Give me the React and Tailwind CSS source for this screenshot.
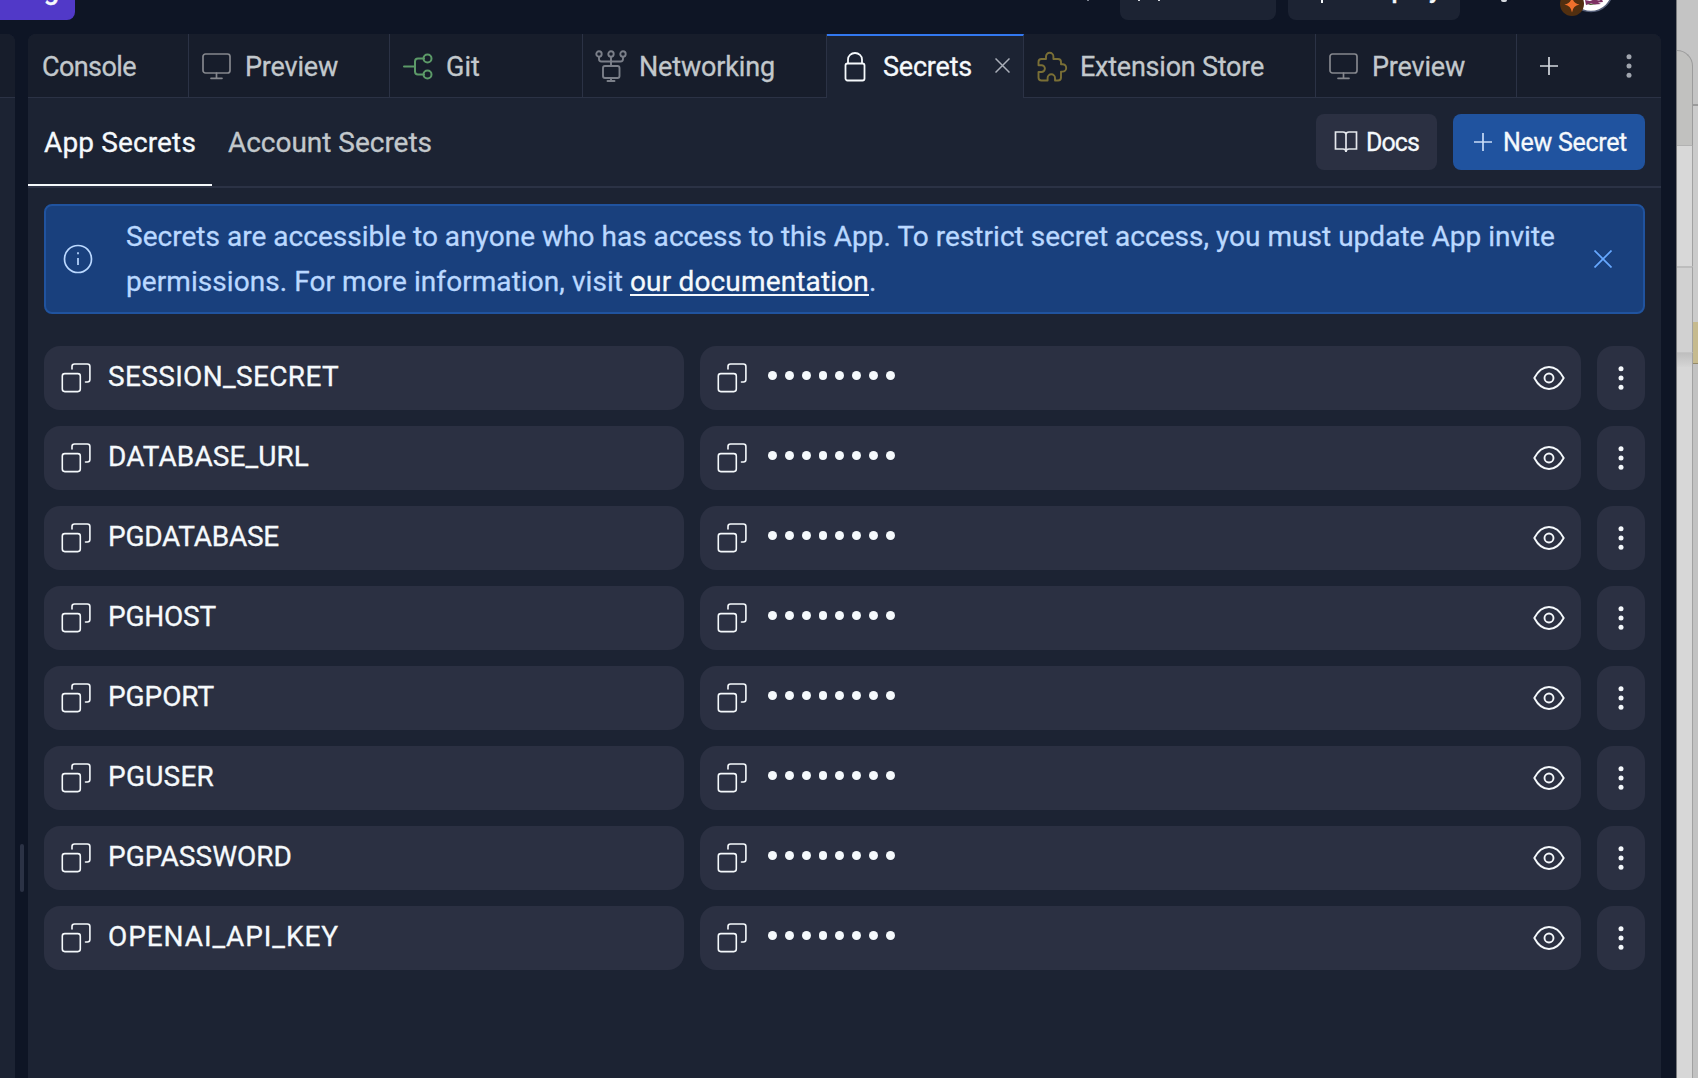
import React from "react";

const ROWS = [
  { name: "SESSION_SECRET", width: 231 },
  { name: "DATABASE_URL", width: 201 },
  { name: "PGDATABASE", width: 171 },
  { name: "PGHOST", width: 108 },
  { name: "PGPORT", width: 106 },
  { name: "PGUSER", width: 106 },
  { name: "PGPASSWORD", width: 184 },
  { name: "OPENAI_API_KEY", width: 231 },
];

/* Spreads or tightens the letters so that the text fills the given width. */
function Fit({ width, className = "", children }) {
  const ref = React.useRef(null);
  const [spacing, setSpacing] = React.useState(0);
  React.useLayoutEffect(() => {
    const el = ref.current;
    el.style.letterSpacing = "0px";
    const natural = el.getBoundingClientRect().width;
    const next = (width - natural) / el.textContent.length;
    el.style.letterSpacing = next + "px";
    setSpacing(next);
  }, [width]);
  return (
    <span ref={ref} className={"inline-block whitespace-nowrap " + className} style={{ letterSpacing: spacing + "px" }}>
      {children}
    </span>
  );
}

function Monitor() {
  return (
    <svg className="h-8 w-8 shrink-0" viewBox="0 0 32 32" fill="none" stroke="#85878d" strokeWidth="1.7" strokeLinecap="round">
      <rect x="2" y="4" width="27" height="19" rx="2.5" />
      <path d="M15.5 23v5M10 28.3h11" />
    </svg>
  );
}
function GitIcon() {
  return (
    <svg className="h-8 w-8 shrink-0" viewBox="0 0 32 32" fill="none" stroke="#5c9a68" strokeWidth="2" strokeLinecap="round">
      <path d="M2 16.500h11M22 8.500h-6q-3 0-3 3v10q0 3 3 3h6" />
      <circle cx="25.5" cy="8.500" r="4" />
      <circle cx="25.5" cy="24.500" r="4" />
    </svg>
  );
}
function NetIcon() {
  return (
    <svg className="h-8 w-8 shrink-0" viewBox="0 0 32 32" fill="none" stroke="#7b7f89" strokeWidth="1.9" strokeLinecap="round">
      <circle cx="4" cy="4" r="2.7" />
      <circle cx="16" cy="4" r="2.7" />
      <circle cx="28" cy="4" r="2.7" />
      <path d="M4 7v2q0 2.500 2.500 2.500h19q2.500 0 2.500-2.500V7M16 7v9M16 28v3M12.500 31h7" />
      <rect x="8" y="16" width="16.500" height="12" rx="2" />
    </svg>
  );
}
function Lock() {
  return (
    <svg className="h-8 w-8 shrink-0" viewBox="0 0 32 32" fill="none" stroke="#f5f9fc" strokeWidth="1.8">
      <rect x="6.500" y="13.500" width="19" height="17" rx="2" />
      <path d="M9 13.500V9.500a7 6.500 0 0 1 14 0v4" />
    </svg>
  );
}
function Puzzle() {
  return (
    <svg className="h-8 w-8 shrink-0" viewBox="0 0 32 32" fill="none" stroke="#7a6f36" strokeWidth="1.900" strokeLinejoin="round">
      <path d="M5.500 9H10V6.500a3.700 3.700 0 0 1 7.400 0V9H22q3 0 3 3V14.200h1.500a3.700 3.700 0 0 1 0 7.400H25V27.500q0 3-3 3h-3v-2.500a3.700 3.700 0 0 0-7.400 0v2.500H5.500q-3 0-3-3v-5.500h3a3.400 3.400 0 0 0 0-6.800h-3V12q0-3 3-3z" />
    </svg>
  );
}
function Copy() {
  return (
    <svg className="h-[30px] w-[30px] shrink-0" viewBox="0 0 30 30" fill="none" stroke="#f5f9fc" strokeWidth="1.6" strokeLinecap="round">
      <rect x="1.300" y="10.600" width="18" height="18" rx="2.500" />
      <path d="M11 6V3.500q0-2.500 2.500-2.500h12.900q2.500 0 2.500 2.500v13q0 2.500-2.500 2.500h-1.900" />
    </svg>
  );
}
function Eye() {
  return (
    <svg className="h-8 w-8" viewBox="0 0 32 32" fill="none" stroke="#f5f9fc" strokeWidth="1.900" strokeLinejoin="round">
      <path d="M1.300 16C5 9 10 5 16 5s11 4 14.700 11C27 23 22 27 16 27S5 23 1.300 16z" />
      <circle cx="16" cy="16" r="4.500" />
    </svg>
  );
}
function Dots({ color }) {
  return (
    <svg className="h-8 w-8" viewBox="0 0 32 32" fill={color}>
      <circle cx="16" cy="6.700" r="2.500" />
      <circle cx="16" cy="16" r="2.500" />
      <circle cx="16" cy="25.300" r="2.500" />
    </svg>
  );
}
function Plus({ color }) {
  return (
    <svg className="h-[18px] w-[18px] shrink-0" viewBox="0 0 18 18" stroke={color} strokeWidth="1.700">
      <path d="M9 0v18M0 9h18" />
    </svg>
  );
}

function Avatar() {
  return (
    <svg className="ml-[48px] h-[34px] w-[60px]" viewBox="0 0 60 34">
      <circle cx="36" cy="-10" r="21.500" fill="#ffffff" stroke="#56607a" strokeWidth="1.600" />
      <path d="M30 0l5 1 4-1.500 5 1 3-1 1 2.500-5 .5 3 1.500-6 .5-4-1-5 1.500z" fill="#7d3163" />
      <path d="M32 3.500l5 .5 4 .5-6 .6z" fill="#48622f" />
      <circle cx="17" cy="4" r="12" fill="#512f10" />
      <path d="M17-3.500q1 7 7.500 8-6.500 1-7.500 8-1-7-7.500-8 6.500-1 7.500-8z" fill="#f0702c" />
    </svg>
  );
}

function Tab({ className, icon, label, width }) {
  return (
    <div className={"flex h-full shrink-0 items-center border-r border-b border-[#2b3245] text-[27px] text-[#c2c8cc] " + className}>
      {icon}
      <Fit width={width} className="pt-[3px]">{label}</Fit>
    </div>
  );
}

/* Light windows that show behind the right edge of the app. */
function Backdrop() {
  return (
    <aside className="flex flex-1 border-l border-[#77797c] bg-[#c4c4c4]">
      <div className="flex w-[16px] flex-col">
        <div className="h-[50px]" />
        <div className="h-[96px] rounded-tr-2xl border-t border-r border-b border-[#9c9c9c] border-b-[#b2b2b2] bg-[#c1c1bf]" />
        <div className="h-[120px] border-r border-[#a2a2a2] bg-[#d8d8d8]" />
        <div className="h-[87px] border-t-2 border-r border-b border-t-[#bdbdbd] border-r-[#a2a2a2] border-b-[#c4c4c4] bg-[#d1d1d1]" />
        <div className="h-[14px] border-r border-[#a2a2a2] bg-gradient-to-b from-[#bebebe] to-[#d5d5d5]" />
        <div className="flex-1 border-r border-[#a2a2a2] bg-[#d7d7d7]" />
      </div>
      <div className="flex flex-1 flex-col">
        <div className="h-[106px] border-b-2 border-[#9b9b9b]" />
        <div className="h-[216px] bg-[#cbcbcb]" />
        <div className="h-[42px] border-b border-[#948a68] bg-[#c6ba8e]" />
        <div className="flex-1 bg-[#c2c2c2]" />
      </div>
    </aside>
  );
}

export default function App() {
  return (
    <div className="flex h-[1078px] w-[1698px] overflow-hidden bg-[#d3d3d3] font-['Roboto','Noto_Sans',sans-serif] [-webkit-text-stroke:0.3px]">
      <div className="flex w-[1676px] shrink-0 flex-col bg-[#0e1525]">
        <header className="flex h-[34px] shrink-0 items-start overflow-hidden text-[25px] leading-5 font-medium text-[#f5f9fc]">
          <div className="flex h-5 w-[75px] items-start justify-end overflow-hidden rounded-br-lg bg-[#5139c8] pr-[16px]">
            <span className="-mt-[20px] text-[27px]">g</span>
          </div>
          <div className="mt-0 ml-[1012px] h-px w-[2px] bg-[#7c8290]" />
          <div className="ml-[31px] flex h-5 w-[156px] gap-[18px] rounded-b-lg bg-[#1c2333] pl-[18px]">
            <i className="h-px w-[2px] bg-[#d5d9df]" />
            <i className="h-px w-[2px] bg-[#d5d9df]" />
          </div>
          <div className="ml-3 flex h-5 w-[172px] items-start overflow-hidden rounded-b-lg bg-[#1c2333] pl-[33px]">
            <i className="h-[3px] w-[2px] bg-[#f5f9fc]" />
            <span className="-mt-[20px] ml-[37px]"><Fit width={82}>Deploy</Fit></span>
          </div>
          <div className="ml-[41px] h-[2px] w-[6px] rounded-b-full bg-[#d5d9df]" />
          <Avatar />
        </header>

        <div className="flex min-h-0 flex-1">
          <div className="w-[15px] overflow-hidden rounded-tr-lg bg-[#1c2333]">
            <div className="h-16 border-b border-[#2b3245] bg-[#171d2b]" />
          </div>
          <div className="flex w-[13px] justify-end pt-[810px] pr-1">
            <div className="h-12 w-1 rounded-sm bg-[#2b3245]" />
          </div>

          <main className="flex w-[1633px] flex-col overflow-hidden rounded-t-lg bg-[#1c2333]">
            <nav className="flex h-16 shrink-0 bg-[#171d2b]">
              <Tab className="w-[161px] pl-[14px]" label="Console" width={94} />
              <Tab className="w-[201px] gap-3 pl-3" icon={<Monitor />} label="Preview" width={93} />
              <Tab className="w-[193px] gap-3 pl-3" icon={<GitIcon />} label="Git" width={34} />
              <Tab className="w-[244px] gap-3 pl-3" icon={<NetIcon />} label="Networking" width={136} />
              <div className="flex h-full w-[197px] shrink-0 items-center border-t-2 border-r border-t-[#3278f0] border-r-[#2b3245] bg-[#1c2333] pb-[3px] pl-[12px] text-[27px] text-[#f5f9fc]">
                <Lock />
                <Fit width={89} className="ml-3 pt-[3px]">Secrets</Fit>
                <svg className="ml-[23px] h-[15px] w-[15px]" viewBox="0 0 15 15" stroke="#a9aeb8" strokeWidth="1.500"><path d="M.5.5l14 14M14.500.5l-14 14" /></svg>
              </div>
              <Tab className="w-[292px] gap-[12px] pl-[12px]" icon={<Puzzle />} label="Extension Store" width={184} />
              <Tab className="w-[201px] gap-3 pl-3" icon={<Monitor />} label="Preview" width={93} />
              <div className="flex flex-1 items-center border-b border-[#2b3245] pl-[23px]">
                <Plus color="#d5d9df" />
                <div className="ml-[55px]"><Dots color="#a0a5ae" /></div>
              </div>
            </nav>

            <div className="flex h-[90px] shrink-0 items-start border-b-2 border-[#2b3245] text-[28px]">
              <div className="flex h-[88px] w-[184px] items-start border-b-2 border-[#f5f9fc] pt-[24px] pl-4 text-[#f5f9fc]">
                <Fit width={152}>App Secrets</Fit>
              </div>
              <div className="pt-[24px] pl-4 text-[#c2c8cc]"><Fit width={204}>Account Secrets</Fit></div>
              <div className="mt-4 mr-4 ml-auto flex gap-4 text-[25px] text-[#f5f9fc]">
                <button className="flex h-14 w-[121px] items-center gap-[8px] rounded-lg bg-[#2b3042] pl-[18px]">
                  <svg className="h-6 w-6" viewBox="0 0 24 24" fill="none" stroke="#e4e7ec" strokeWidth="1.700"><path d="M12 4.500q0-2.500-3-2.500H1.500v17H9q3 0 3 3M12 4.500q0-2.500 3-2.500h7.500v17H15q-3 0-3 3V4.500" /></svg>
                  <Fit width={53} className="pt-[2px]">Docs</Fit>
                </button>
                <button className="flex h-14 w-[192px] items-center gap-[11px] rounded-lg bg-[#20539f] pl-[21px]">
                  <Plus color="#c8dcf7" />
                  <Fit width={124} className="pt-[2px]">New Secret</Fit>
                </button>
              </div>
            </div>

            <section className="mx-4 mt-4 flex h-[110px] shrink-0 items-center rounded-lg border-2 border-[#20539f] bg-[#19407d] text-[28px] leading-[45px] text-[#bad8ff]">
              <svg className="ml-[17px] h-[30px] w-[30px]" viewBox="0 0 30 30" fill="none" stroke="#bad8ff" strokeWidth="1.700">
                <circle cx="15" cy="15" r="13.500" />
                <path d="M15 14v7M15 8.300v2" />
              </svg>
              <div className="ml-[33px] w-[1440px]">
                <Fit width={1429}>Secrets are accessible to anyone who has access to this App. To restrict secret access, you must update App invite</Fit>
                <div className="whitespace-nowrap">
                  <Fit width={497}>permissions. For more information, visit</Fit>
                  <Fit width={239} className="ml-[7px] text-[#f5f9fc] underline decoration-2 underline-offset-[3px]">our documentation</Fit>.
                </div>
              </div>
              <svg className="ml-[28px] h-[18px] w-[18px]" viewBox="0 0 18 18" stroke="#66a8ff" strokeWidth="1.700"><path d="M.5.5l17 17M17.500.5l-17 17" /></svg>
            </section>

            <section className="mx-4 mt-8 flex flex-col gap-4">
              {ROWS.map((r) => (
                <div key={r.name} className="flex h-16 gap-4 text-[28px] text-[#f5f9fc]">
                  <div className="flex w-[640px] items-center gap-[17px] rounded-2xl bg-[#2b3042] pl-[17px]">
                    <Copy />
                    <div className="-mt-[2px]"><Fit width={r.width}>{r.name}</Fit></div>
                  </div>
                  <div className="flex w-[881px] items-center rounded-2xl bg-[#2b3042] pr-4 pl-[17px]">
                    <Copy />
                    <span className="mb-[5px] ml-[21px] flex gap-2">
                      {[0, 1, 2, 3, 4, 5, 6, 7].map((i) => <i key={i} className="h-[9px] w-[8.850px] rounded-full bg-[#f5f9fc]" />)}
                    </span>
                    <span className="ml-auto"><Eye /></span>
                  </div>
                  <div className="flex w-12 items-center justify-center rounded-2xl bg-[#2b3042]"><Dots color="#f5f9fc" /></div>
                </div>
              ))}
            </section>
          </main>
        </div>
      </div>
      <Backdrop />
    </div>
  );
}
